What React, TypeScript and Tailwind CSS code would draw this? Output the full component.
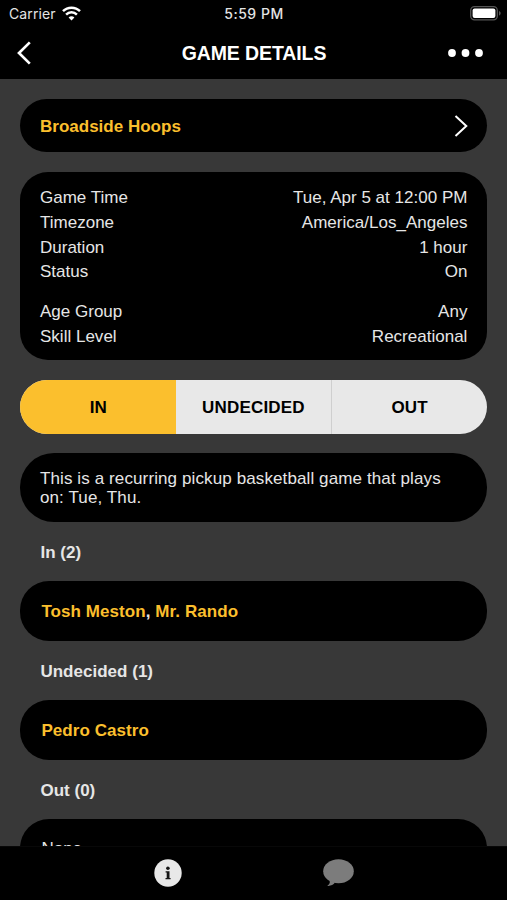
import React from 'react';

interface DetailRow {
  label: string;
  value: string;
}

interface ResponseGroup {
  title: string;
  names: string[];
}

const scheduleRows: DetailRow[] = [
  { label: 'Game Time', value: 'Tue, Apr 5 at 12:00 PM' },
  { label: 'Timezone', value: 'America/Los_Angeles' },
  { label: 'Duration', value: '1 hour' },
  { label: 'Status', value: 'On' },
];

const playerRows: DetailRow[] = [
  { label: 'Age Group', value: 'Any' },
  { label: 'Skill Level', value: 'Recreational' },
];

const responseGroups: ResponseGroup[] = [
  { title: 'In (2)', names: ['Tosh Meston', 'Mr. Rando'] },
  { title: 'Undecided (1)', names: ['Pedro Castro'] },
  { title: 'Out (0)', names: [] },
];

function StatusBar() {
  return (
    <div className="grid h-[27px] grid-cols-3 items-center pl-[9px] pr-[6px] font-['Inter',sans-serif] text-[14px] text-[#e4e4e4]">
      <div className="flex items-center gap-[6px]">
        <span className="tracking-[0.1px]">Carrier</span>
        <svg width="19" height="15" viewBox="0 0 19 15" fill="none" stroke="#fff" strokeWidth="2.5">
          <path d="M1 5.2a12 12 0 0 1 17 0" />
          <path d="M4.1 8.6a7.6 7.6 0 0 1 10.8 0" />
          <path d="M9.5 14.4l-2.9-3a4 4 0 0 1 5.8 0z" fill="#fff" stroke="none" />
        </svg>
      </div>
      <span className="-ml-[2px] text-center font-medium tracking-[0.5px]">5:59 PM</span>
      <svg className="justify-self-end" width="31" height="15" viewBox="0 0 31 15">
        <rect x="0.7" y="0.7" width="26.6" height="13.2" rx="3.8" fill="none" stroke="#555" strokeWidth="1.3" />
        <rect x="2.6" y="2.6" width="22.8" height="9.4" rx="2" fill="#fff" />
        <path d="M29 5c2.2.8 2.2 3.8 0 4.6z" fill="#555" />
      </svg>
    </div>
  );
}

function Header() {
  return (
    <header className="h-[79px] shrink-0 bg-black">
      <StatusBar />
      <div className="flex h-[51px] items-center justify-between pl-[17px] pr-[24px]">
        <svg width="14" height="24" viewBox="0 0 14 24" fill="none" stroke="#fff" strokeWidth="2.7">
          <path d="M12.8 1.4L2 12l10.8 10.6" />
        </svg>
        <h1 className="pl-[29px] pt-[2px] text-[19.5px] font-bold tracking-[-0.1px] text-white">GAME DETAILS</h1>
        <svg width="35" height="8" viewBox="0 0 35 8" fill="#fff">
          <circle cx="4" cy="4" r="3.9" />
          <circle cx="17.5" cy="4" r="3.9" />
          <circle cx="31" cy="4" r="3.9" />
        </svg>
      </div>
    </header>
  );
}

function Rows({ rows }: { rows: DetailRow[] }) {
  return (
    <div>
      {rows.map((row) => (
        <div key={row.label} className="flex h-[24.8px] items-center justify-between">
          <span>{row.label}</span>
          <span>{row.value}</span>
        </div>
      ))}
    </div>
  );
}

function ResponseSection({ title, names }: ResponseGroup) {
  return (
    <section>
      <h2 className="flex h-[59px] items-center pl-[20px] pt-[3px] font-bold tracking-[0.02px]">{title}</h2>
      <div className="flex h-[60px] items-center rounded-[29px] bg-black pl-[21px]">
        {names.length === 0 && <span className="pb-px">None</span>}
        <p className="pt-[2px] font-bold tracking-[0.07px]">
          {names.map((name, i) => (
            <React.Fragment key={name}>
              {i > 0 && ', '}
              <span className="text-[#fbbf2d]">{name}</span>
            </React.Fragment>
          ))}
        </p>
      </div>
    </section>
  );
}

export default function App() {
  return (
    <div className="flex h-[900px] w-[507px] flex-col overflow-hidden bg-[#383838] font-['Liberation_Sans',Arial,sans-serif] text-[17px] tracking-[0.01px] text-[#e6e6e6]">
      <Header />

      <main className="min-h-0 flex-1 overflow-hidden pl-[20.4px] pr-[19.6px] pt-[20px]">
        {/* Group link */}
        <div className="flex h-[53px] items-center justify-between rounded-[26.5px] bg-black px-[19.6px]">
          <span className="pt-[2px] font-bold text-[#fbbf2d]">Broadside Hoops</span>
          <svg width="14" height="22" viewBox="0 0 14 22" fill="none" stroke="#fff" strokeWidth="2">
            <path d="M1.5 0.9L12.3 11L1.5 21.1" />
          </svg>
        </div>

        {/* Game details */}
        <div className="mt-[20px] flex h-[188px] flex-col gap-[15px] rounded-[28px] bg-black pl-[19.6px] pr-[20px] pt-[13.4px]">
          <Rows rows={scheduleRows} />
          <Rows rows={playerRows} />
        </div>

        {/* Response picker */}
        <div className="mt-[19.5px] grid h-[54px] grid-cols-3 overflow-hidden rounded-[27px] bg-[#e8e8e8] text-[17px] font-bold text-black">
          <button className="bg-[#fbbf2d] pt-[2px]">IN</button>
          <button className="pr-px pt-[2px] tracking-[0.2px]">UNDECIDED</button>
          <button className="-ml-px border-l border-[#cfcfcf] pt-[2px]">OUT</button>
        </div>

        {/* Description */}
        <div className="mt-[19.5px] flex h-[69px] items-center rounded-[34px] bg-black pl-[19.6px] pr-[30px] pt-px">
          <p className="leading-[19.5px] tracking-[0.11px]">
            This is a recurring pickup basketball game that plays on: Tue, Thu.
          </p>
        </div>

        {responseGroups.map((group) => (
          <ResponseSection key={group.title} {...group} />
        ))}
      </main>

      {/* Tab bar */}
      <nav className="flex h-[54px] shrink-0 justify-center gap-[141px] border-t border-[#080808] bg-black pt-[12px]">
        <svg width="28" height="28" viewBox="0 0 28 28">
          <circle cx="14" cy="14" r="13.7" fill="#e8e8e8" />
          <circle cx="13.9" cy="9.2" r="1.8" fill="#161616" />
          <path d="M11.6 12.2h3.9v6.8h1.1v1.2h-5.1V19h1.2v-5.6h-1.1z" fill="#161616" />
        </svg>
        <svg width="31" height="28" viewBox="0 0 31 28" fill="#7c7c7c">
          <ellipse cx="15.5" cy="12.3" rx="15.3" ry="12" />
          <path d="M6.5 21.5c.8 2.2.2 3.6-2.2 5.4c3.400.3 5.900-.9 7.700-3.300z" />
        </svg>
      </nav>
    </div>
  );
}
